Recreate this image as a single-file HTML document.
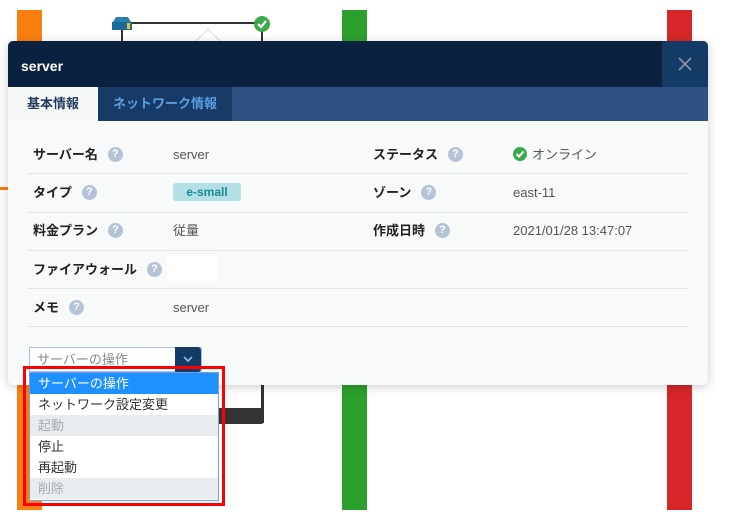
<!DOCTYPE html>
<html><head><meta charset="utf-8"><style>
*{box-sizing:border-box;margin:0;padding:0}
body{width:735px;height:527px;background:#fff;position:relative;overflow:hidden;font-family:"Liberation Sans","Noto Sans CJK JP",sans-serif;font-size:13px}
.a{position:absolute}
.q{display:inline-block;width:15px;height:15px;border-radius:50%;background:#b4c3d6;color:#fff;font-size:11px;font-weight:bold;text-align:center;line-height:15px;vertical-align:top;margin-top:1px;margin-left:10px}
.lab{position:absolute;font-weight:bold;color:#222;font-size:13px;line-height:17px;height:17px}
.val{position:absolute;color:#555;font-size:13px;line-height:17px}
.hr{position:absolute;height:1px;background:#e3e6e9}
.it{height:21px;line-height:21px;padding-left:8px;font-size:13px;color:#333;background:#fff}
.dis{background:#e9ecef;color:#aaa}
</style></head><body>
<div class="a" style="left:17px;top:10px;width:25px;height:500px;background:#fb7f10"></div>
<div class="a" style="left:342px;top:10px;width:25px;height:500px;background:#2ca02c"></div>
<div class="a" style="left:667px;top:10px;width:25px;height:500px;background:#d62728"></div>
<div class="a" style="left:0;top:187px;width:8px;height:3px;background:#fb7f10"></div>
<div class="a" style="left:122px;top:22px;width:140px;height:2px;background:#333"></div>
<div class="a" style="left:121px;top:24px;width:2px;height:18px;background:#333"></div>
<div class="a" style="left:261px;top:24px;width:2px;height:18px;background:#333"></div>
<svg class="a" style="left:111px;top:14px" width="22" height="18"><path d="M2 8 L5 3 H17 L20 8 Z" fill="#2a7fb0"/><rect x="1" y="8" width="20" height="8" fill="#1a6a9a"/><rect x="16" y="9" width="3" height="6" fill="#f0c020"/></svg>
<svg class="a" style="left:253px;top:15px" width="18" height="18"><circle cx="9" cy="9" r="8" fill="#3aaa4a"/><path d="M5 9 L8 12 L13 6" stroke="#fff" stroke-width="2.2" fill="none"/></svg>
<svg class="a" style="left:195px;top:28px" width="26" height="14"><path d="M1 13 L13 1 L25 13" stroke="#ddd" fill="#fff"/></svg>
<div class="a" style="left:261px;top:385px;width:3px;height:38px;background:#333"></div>
<div class="a" style="left:219px;top:408px;width:45px;height:16px;background:#333;border-radius:0 0 3px 0"></div>
<div class="a" style="left:8px;top:41px;width:700px;height:344px;background:#f8f9f9;border-radius:5px;box-shadow:0 2px 10px rgba(0,0,0,.2);overflow:hidden">
 <div class="a" style="left:0;top:0;width:700px;height:46px;background:#0a223f"></div>
 <div class="a" style="left:13px;top:17px;color:#fff;font-weight:bold;font-size:14px">server</div>
 <div class="a" style="left:654px;top:0;width:46px;height:46px;background:#143a66"></div>
 <svg class="a" style="left:670px;top:16px" width="14" height="14"><path d="M1 1 L13 13 M13 1 L1 13" stroke="#8a95a5" stroke-width="1.6"/></svg>
 <div class="a" style="left:0;top:46px;width:700px;height:34px;background:#2f5284"></div>
 <div class="a" style="left:0;top:46px;width:90px;height:34px;background:#f7f8f8;color:#1e3a5f;font-weight:bold;text-align:center;line-height:34px">基本情報</div>
 <div class="a" style="left:90px;top:46px;width:134px;height:34px;background:#173a66;color:#5b9ee0;font-weight:bold;text-align:center;line-height:34px">ネットワーク情報</div>
 <div class="lab" style="left:25px;top:105px">サーバー名<span class="q">?</span></div>
 <div class="val" style="left:165px;top:105px">server</div>
 <div class="lab" style="left:365px;top:105px">ステータス<span class="q">?</span></div>
 <svg class="a" style="left:504px;top:105px" width="16" height="16"><circle cx="8" cy="8" r="7" fill="#3aaa4a"/><path d="M4.5 8 L7 10.5 L11.5 5.5" stroke="#fff" stroke-width="2" fill="none"/></svg>
 <div class="val" style="left:524px;top:105px">オンライン</div>
 <div class="hr" style="left:20px;top:132px;width:660px"></div>
 <div class="lab" style="left:25px;top:143px">タイプ<span class="q">?</span></div>
 <div class="a" style="left:165px;top:142px;width:68px;height:18px;border-radius:3px;background:#b2e0e4;color:#1a8a96;font-weight:bold;font-size:12px;text-align:center;line-height:18px">e-small</div>
 <div class="lab" style="left:365px;top:143px">ゾーン<span class="q">?</span></div>
 <div class="val" style="left:505px;top:143px">east-11</div>
 <div class="hr" style="left:20px;top:171px;width:660px"></div>
 <div class="lab" style="left:25px;top:181px">料金プラン<span class="q">?</span></div>
 <div class="val" style="left:165px;top:181px">従量</div>
 <div class="lab" style="left:365px;top:181px">作成日時<span class="q">?</span></div>
 <div class="val" style="left:505px;top:181px">2021/01/28 13:47:07</div>
 <div class="hr" style="left:20px;top:209px;width:660px"></div>
 <div class="lab" style="left:25px;top:220px">ファイアウォール<span class="q">?</span></div>
 <div class="a" style="left:159px;top:213px;width:50px;height:27px;background:#fff"></div>
 <div class="hr" style="left:20px;top:247px;width:660px"></div>
 <div class="lab" style="left:25px;top:258px">メモ<span class="q">?</span></div>
 <div class="val" style="left:165px;top:258px">server</div>
 <div class="hr" style="left:20px;top:285px;width:660px"></div>
 <div class="a" style="left:21px;top:306px;width:173px;height:25px;border:1px solid #a8c0e8;background:#fff;color:#888;font-size:13px;line-height:23px;padding-left:7px">サーバーの操作</div>
 <div class="a" style="left:167px;top:306px;width:26px;height:25px;background:#143a66;border-radius:0 3px 3px 0"></div>
 <svg class="a" style="left:175px;top:315px" width="10" height="7"><path d="M1 1 L5 5 L9 1" stroke="#8ab4e8" stroke-width="1.8" fill="none"/></svg>
</div>
<div class="a" style="left:23px;top:366px;width:202px;height:140px;border:3px solid #f00"></div>
<div class="a" style="left:29px;top:372px;width:190px;height:129px;border:1px solid #7a9fd8;background:#fff">
 <div class="it" style="background:#1e90ff;color:#fff">サーバーの操作</div>
 <div class="it">ネットワーク設定変更</div>
 <div class="it dis">起動</div>
 <div class="it">停止</div>
 <div class="it">再起動</div>
 <div class="it dis">削除</div>
</div>
</body></html>
